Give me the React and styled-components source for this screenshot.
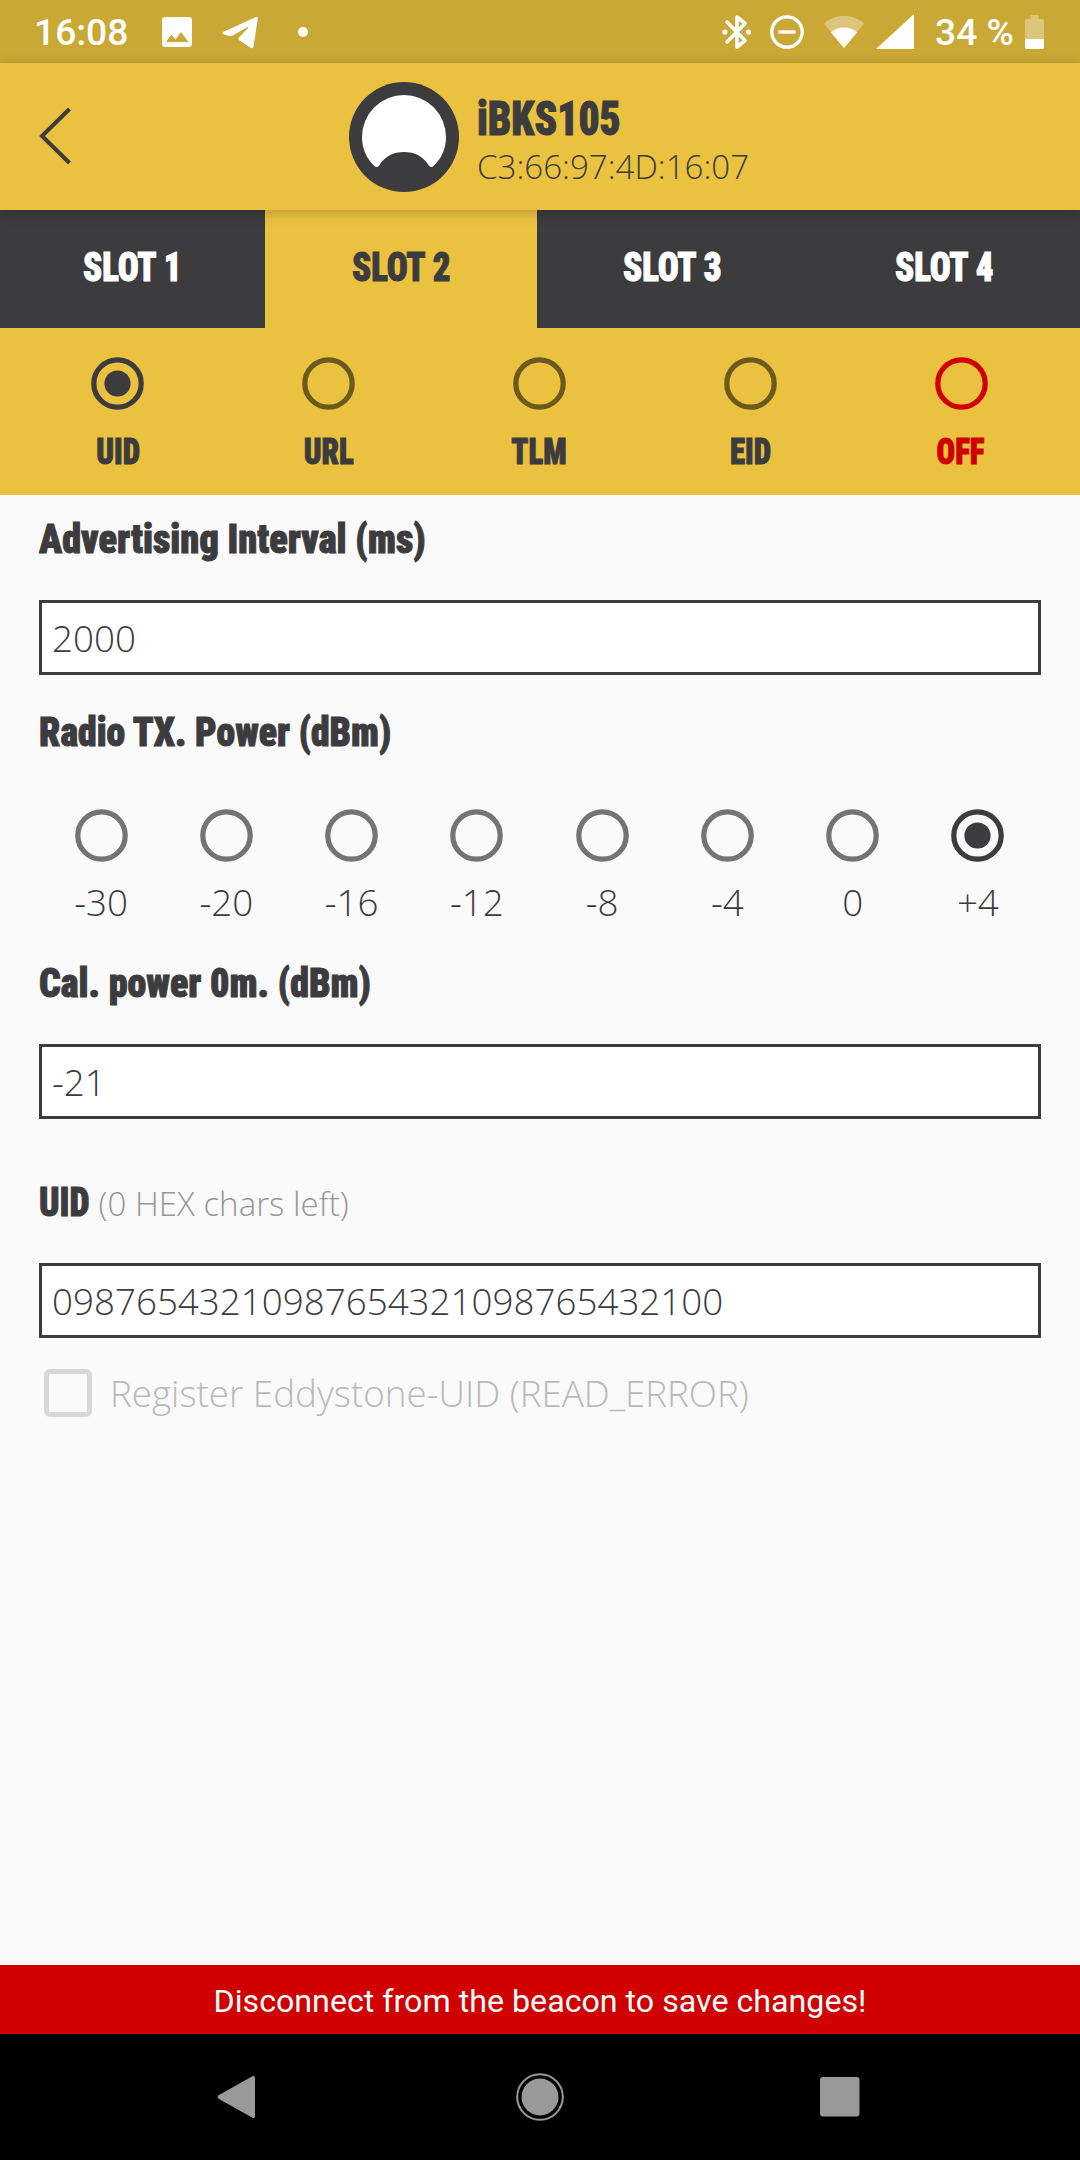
import React from "react";
import styled, { createGlobalStyle } from "styled-components";

const INK = "#3c3c3e";
const AMBER = "#ebc23f";
const RED = "#d00000";

const GlobalStyle = createGlobalStyle`
  * { box-sizing: border-box; }
  body { margin: 0; background: #fafafa; }
`;

const Screen = styled.div`
  width: 1080px;
  height: 2160px;
  display: flex;
  flex-direction: column;
  overflow: hidden;
  background: #fafafa;
  color: ${INK};
  font-family: "Open Sans", "Noto Sans", sans-serif;
  font-weight: 300;
`;

const StatusBar = styled.div`
  height: 63px;
  flex: none;
  display: flex;
  align-items: center;
  padding: 0 36px 0 34px;
  background: #caa835;
  color: #fff;
  font: 500 37.2px/64px Roboto, sans-serif;
  svg { display: block; flex: none; }
`;

const Clock = styled.span`
  width: 128px;
`;

const Notifications = styled.div`
  display: flex;
  align-items: center;
  gap: 30px;
  flex: 1;
`;

const Indicators = styled.div`
  display: flex;
  align-items: center;
`;

const BatteryLevel = styled.span`
  width: 90px;
  margin-left: 21px;
  white-space: pre;
`;

const Header = styled.header`
  height: 147px;
  flex: none;
  display: flex;
  align-items: center;
  background: ${AMBER};
  position: relative;
  z-index: 1;
  box-shadow: 0 3px 12px rgba(0, 0, 0, 0.22);
  svg { display: block; flex: none; }
`;

const BackButton = styled.div`
  width: 349px;
  padding: 0 0 1px 36px;
`;

const Device = styled.div`
  margin-left: 18px;
  padding-top: 9px;
  display: flex;
  flex-direction: column;
`;

const Display = styled.span`
  display: inline-block;
  font-family: Roboto, sans-serif;
  font-stretch: 75%;
  font-weight: 900;
  font-size: ${(p) => p.$size || 40.5}px;
  line-height: 52px;
  color: ${(p) => p.$color || INK};
  -webkit-text-stroke: 1px ${(p) => p.$color || INK};
  white-space: nowrap;
  transform: scaleX(${(p) => p.$squeeze || 1});
  transform-origin: ${(p) => (p.$centered ? "center" : "left")} center;
`;

const Address = styled.span`
  font-size: 33.1px;
  line-height: 44px;
  white-space: nowrap;
`;

const Tabs = styled.nav`
  height: 118px;
  flex: none;
  display: grid;
  grid-template-columns: 265px 272px 271px 272px;
`;

const Tab = styled.div`
  display: flex;
  justify-content: center;
  padding-top: 31px;
  background: ${(p) => (p.$active ? AMBER : INK)};
`;

const FrameTypes = styled.div`
  height: 167px;
  flex: none;
  padding: 28.500px 13.600px 0 12.400px;
  display: grid;
  grid-template-columns: repeat(5, 1fr);
  background: ${AMBER};
`;

const Option = styled.div`
  display: flex;
  flex-direction: column;
  align-items: center;
  gap: ${(p) => p.$gap}px;
`;

const RadioMark = styled.svg`
  width: 53px;
  height: 53px;
  flex: none;
  display: block;
`;

const Form = styled.main`
  flex: 1;
  padding: 18px 39px 0;
  display: flex;
  flex-direction: column;
`;

const Label = styled.div`
  height: 52px;
  margin-top: ${(p) => p.$top || 0}px;
  display: flex;
  align-items: baseline;
`;

const Hint = styled.span`
  font-size: 33.1px;
  line-height: 52px;
  color: #979797;
  margin-left: ${(p) => p.$left}px;
  white-space: nowrap;
`;

const Field = styled.div`
  height: 75px;
  margin-top: 35px;
  padding: 0 10px;
  border: 3px solid ${INK};
  background: #fff;
  font-size: 36.75px;
  line-height: 71px;
`;

const PowerLevels = styled.div`
  margin: 51px 0.500px 0 -0.500px;
  display: grid;
  grid-template-columns: repeat(8, 1fr);
`;

const Level = styled.span`
  font-size: 36.75px;
  line-height: 44px;
`;

const Register = styled.div`
  margin-top: 31px;
  display: flex;
  align-items: center;
  height: 48px;
  padding-left: 5px;
  gap: 18px;
  color: #b9b9b9;
  font-size: 36.75px;
  line-height: 48px;
  white-space: nowrap;
`;

const Checkbox = styled.span`
  width: 48px;
  height: 48px;
  border: 5px solid #d8d8d8;
  border-radius: 6px;
`;

const Warning = styled.div`
  height: 69px;
  flex: none;
  background: ${RED};
  color: #fff;
  text-align: center;
  font: 400 32.2px/72px Roboto, sans-serif;
`;

const NavBar = styled.div`
  height: 126px;
  flex: none;
  display: grid;
  grid-template-columns: 54px 54px 54px;
  justify-content: center;
  align-items: center;
  column-gap: 246px;
  background: #000;
  svg { display: block; }
`;

function Radio({ color, checked }) {
  return (
    <RadioMark viewBox="0 0 53 53">
      <circle cx="26.500" cy="26.500" r="23.700" fill="none" stroke={color} strokeWidth="5.250" />
      {checked && <circle cx="26.500" cy="26.500" r="13.100" fill={color} />}
    </RadioMark>
  );
}

const slots = [
  { name: "SLOT 1" },
  { name: "SLOT 2", active: true },
  { name: "SLOT 3" },
  { name: "SLOT 4" },
];

const frames = [
  { name: "UID", color: INK, ring: INK, checked: true },
  { name: "URL", color: INK, ring: "#6b5a1d" },
  { name: "TLM", color: INK, ring: "#6b5a1d" },
  { name: "EID", color: INK, ring: "#6b5a1d" },
  { name: "OFF", color: RED, ring: RED },
];

const levels = ["-30", "-20", "-16", "-12", "-8", "-4", "0", "+4"];

export default function App() {
  return (
    <Screen>
      <GlobalStyle />
      <StatusBar>
        <Clock>16:08</Clock>
        <Notifications>
          <svg width="30" height="30" viewBox="0 0 30 30">
            <path fill="#fff" fillRule="evenodd" d="M3.3 0h23.4A3.3 3.3 0 0 1 30 3.3v23.4a3.3 3.3 0 0 1-3.3 3.3H3.3A3.3 3.3 0 0 1 0 26.700V3.300A3.300 3.300 0 0 1 3.300 0ZM4 25h22.500l-7.500-10-5.600 7.500-4-5Z" />
          </svg>
          <svg width="36" height="34" viewBox="0 0 36 34">
            <path fill="#fff" d="M1.500 16.800 33.500 2.200c1.400-.6 2.500.1 2.300 1.600l-4.300 27.600c-.3 1.900-1.700 2.200-3.200 1.200l-11-7.400c-1.300-.9-1.200-1.900-.1-2.900l8.600-9.100c.9-1 .2-1.500-1-.8L10.600 20.500c-1 .7-2 .7-3.100.4L1.600 19.300c-1.600-.5-1.600-1.800-.1-2.500Z" />
          </svg>
          <svg width="50" height="12" viewBox="0 0 50 12">
            <circle cx="15" cy="6" r="5" fill="#fff" />
          </svg>
        </Notifications>
        <Indicators>
          <svg width="30" height="36" viewBox="0 0 30 36" fill="none" stroke="#fff" strokeWidth="3.600" strokeLinejoin="round" strokeLinecap="round">
            <path d="M5 8 23 26.500 15 33V3l8 6.500L5 28" />
            <circle cx="3" cy="18" r="2.600" fill="#fff" stroke="none" />
            <circle cx="26.500" cy="18" r="2.600" fill="#fff" stroke="none" />
          </svg>
          <svg width="36" height="36" viewBox="0 0 36 36" fill="none" stroke="#fff" strokeWidth="3.300" style={{ marginLeft: 17 }}>
            <circle cx="18" cy="18" r="15.200" />
            <path d="M9.500 18h17" />
          </svg>
          <svg width="40" height="34" viewBox="0 0 40 34" style={{ marginLeft: 19 }}>
            <path fill="#fff" fillOpacity=".35" d="M0 8.500C5 3.500 12.500 1 20 1s15 2.500 20 7.500L20 33Z" />
            <path fill="#fff" d="M7 17.500c3.500-3.300 8-5 13-5s9.500 1.700 13 5L20 33Z" />
          </svg>
          <svg width="38" height="35" viewBox="0 0 38 35" style={{ marginLeft: 12 }}>
            <path fill="#fff" d="M0 35 38 0v35Z" />
          </svg>
          <BatteryLevel>34 %</BatteryLevel>
          <svg width="19" height="34" viewBox="0 0 19 34">
            <path fill="#fff" fillOpacity=".35" d="M5.500 0h8v4H17.500A1.500 1.500 0 0 1 19 5.500V24H0V5.500A1.500 1.500 0 0 1 1.500 4h4Z" />
            <path fill="#fff" d="M0 24h19v8.500a1.500 1.500 0 0 1-1.500 1.500h-16A1.500 1.500 0 0 1 0 32.500Z" />
          </svg>
        </Indicators>
      </StatusBar>

      <Header>
        <BackButton>
          <svg width="38" height="60" viewBox="0 0 38 60">
            <path d="M33.500 3 6 30l27.500 27" fill="none" stroke={INK} strokeWidth="4" />
          </svg>
        </BackButton>
        <svg width="110" height="110" viewBox="0 0 110 110">
          <circle cx="55" cy="55" r="55" fill={INK} />
          <path fill="#fff" d="M26 84.500C17.500 77 13 66.500 13 55a42 42 0 0 1 84 0c0 11.500-4.500 22-13 29.500-1.500 1-3.500.500-4.500-1.500-5-8.500-14-13-24.500-13s-19.500 4.500-24.500 13c-1 2-3 2.500-4.500 1.500Z" />
        </svg>
        <Device>
          <Display $size={49} $squeeze={0.845}>iBKS105</Display>
          <Address>C3:66:97:4D:16:07</Address>
        </Device>
      </Header>

      <Tabs>
        {slots.map((s) => (
          <Tab key={s.name} $active={s.active}>
            <Display $centered $squeeze={0.86} $color={s.active ? INK : "#fff"}>{s.name}</Display>
          </Tab>
        ))}
      </Tabs>

      <FrameTypes>
        {frames.map((f) => (
          <Option key={f.name} $gap={16}>
            <Radio color={f.ring} checked={f.checked} />
            <Display $centered $size={36.75} $squeeze={0.84} $color={f.color}>{f.name}</Display>
          </Option>
        ))}
      </FrameTypes>

      <Form>
        <Label><Display $squeeze={0.945}>Advertising Interval (ms)</Display></Label>
        <Field>2000</Field>
        <Label $top={31}><Display $squeeze={0.932}>Radio TX. Power (dBm)</Display></Label>
        <PowerLevels>
          {levels.map((l) => (
            <Option key={l} $gap={18}>
              <Radio color={l === "+4" ? INK : "#747474"} checked={l === "+4"} />
              <Level>{l}</Level>
            </Option>
          ))}
        </PowerLevels>
        <Label $top={33}><Display $squeeze={0.938}>Cal. power 0m. (dBm)</Display></Label>
        <Field>-21</Field>
        <Label $top={57}>
          <Display $squeeze={0.88}>UID</Display>
          <Hint $left={2}>(0 HEX chars left)</Hint>
        </Label>
        <Field>09876543210987654321098765432100</Field>
        <Register>
          <Checkbox />
          <span>Register Eddystone-UID (READ_ERROR)</span>
        </Register>
      </Form>

      <Warning>Disconnect from the beacon to save changes!</Warning>
      <NavBar>
        <svg width="54" height="54" viewBox="0 0 54 54">
          <path d="M6 25 39 6.500q3-1.500 3 1.500v38q0 3-3 1.500L6 29q-3-2 0-4Z" fill="#999" />
        </svg>
        <svg width="54" height="54" viewBox="0 0 54 54">
          <circle cx="27" cy="27" r="22.800" fill="none" stroke="#999" strokeWidth="2" />
          <circle cx="27" cy="27" r="18.500" fill="#999" />
        </svg>
        <svg width="54" height="54" viewBox="0 0 54 54">
          <rect x="7" y="7" width="39.500" height="39.500" rx="3" fill="#999" />
        </svg>
      </NavBar>
    </Screen>
  );
}
